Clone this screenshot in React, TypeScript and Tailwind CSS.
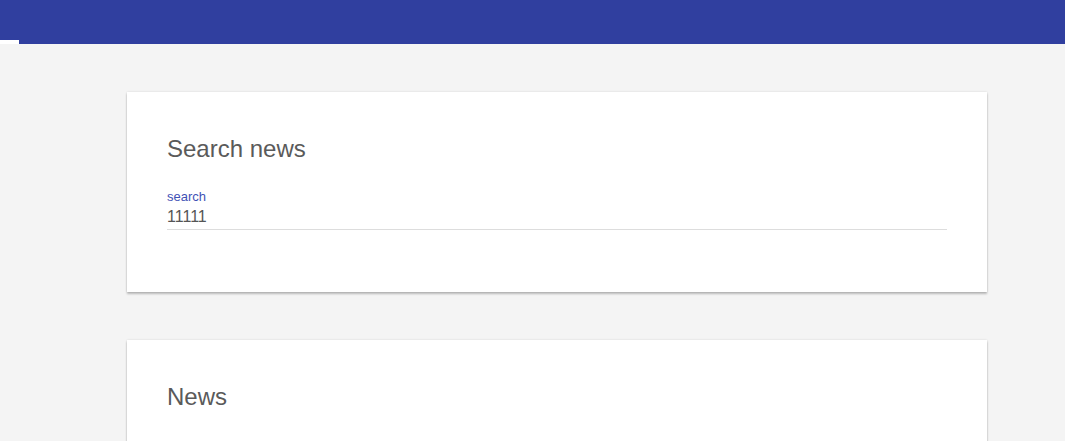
import React, { useState } from 'react';

const Card = ({ title, children }: { title: string; children?: React.ReactNode }) => (
    <section className="w-[860px] bg-white px-[40px] pt-[43px] pb-[62px] shadow-[0_2px_2px_rgba(0,0,0,0.24),0_0_2px_rgba(0,0,0,0.12)]">
        <h2 className="text-[24px] leading-[28px] text-[#5a5a5a] font-normal">{title}</h2>
        {children}
    </section>
);

export default function App() {
    const [query, setQuery] = useState('11111');

    return (
        <div className="min-h-screen bg-[#f4f4f4] font-['Liberation_Sans',Arial,sans-serif]">
            {/* Top bar */}
            <header className="relative h-[44px] bg-[#303f9f]">
                <div className="absolute left-0 bottom-0 h-[4px] w-[19px] bg-white"></div>
            </header>

            <main className="flex flex-col gap-[48px] pl-[127px] pt-[48px] pb-[48px]">
                <Card title="Search news">
                    <label className="mt-[26px] flex flex-col border-b border-[#dddddd] pb-[2px]">
                        <span className="text-[13px] leading-[15px] text-[#3f51b5]">search</span>
                        <input
                            value={query}
                            onChange={(e) => setQuery(e.target.value)}
                            className="mt-[3px] h-[20px] text-[16px] leading-[20px] text-[#555555] outline-none bg-transparent"
                        />
                    </label>
                </Card>

                <Card title="News">
                    <div className="h-[120px]"></div>
                </Card>
            </main>
        </div>
    );
}
